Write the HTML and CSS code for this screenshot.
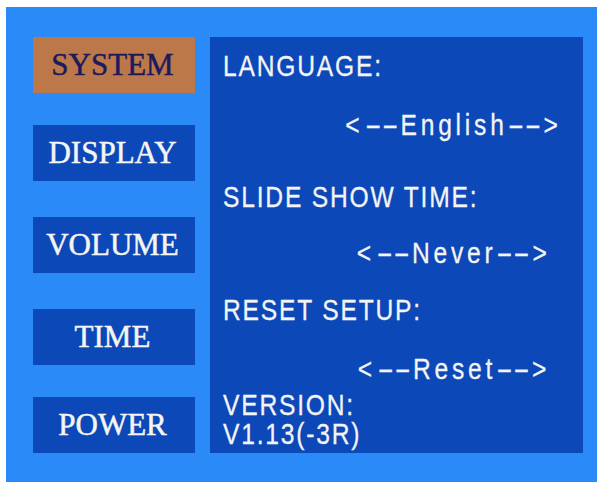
FILE: index.html
```html
<!DOCTYPE html>
<html>
<head>
<meta charset="utf-8">
<link rel="stylesheet" href="styles.css">
</head>
<body>
<div class="screen">
  <div class="menu">
    <div class="btn active">SYSTEM</div>
    <div class="btn">DISPLAY</div>
    <div class="btn wide-gap">VOLUME</div>
    <div class="btn wide-gap">TIME</div>
    <div class="btn">POWER</div>
  </div>
  <div class="panel">
    <div class="row label"><span class="txt">LANGUAGE:</span></div>
    <div class="row value"><span class="txt"><span class="lt">&lt;</span><span class="dash">--</span><span class="word">English</span><span class="dash">--</span><span class="gt">&gt;</span></span></div>
    <div class="row label"><span class="txt">SLIDE SHOW TIME:</span></div>
    <div class="row value"><span class="txt"><span class="lt">&lt;</span><span class="dash">--</span><span class="word">Never</span><span class="dash">--</span><span class="gt">&gt;</span></span></div>
    <div class="row label"><span class="txt">RESET SETUP:</span></div>
    <div class="row value"><span class="txt"><span class="lt">&lt;</span><span class="dash">--</span><span class="word">Reset</span><span class="dash">--</span><span class="gt">&gt;</span></span></div>
    <div class="row label"><span class="txt">VERSION:</span></div>
    <div class="row label"><span class="txt">V1.13(-3R)</span></div>
  </div>
</div>
</body>
</html>
```
FILE: styles.css
```css
html, body {
  margin: 0;
  padding: 0;
  background: #ffffff;
}
body {
  width: 603px;
  height: 484px;
  padding: 7px 0 0 6px;
  box-sizing: border-box;
}
.screen {
  width: 591px;
  height: 475px;
  background: #2a8af8;
  box-sizing: border-box;
  padding: 30px 14px 29px 27px;
  display: flex;
  gap: 15px;
}
.menu {
  width: 162px;
  flex: none;
  display: flex;
  flex-direction: column;
  gap: 32px;
}
.btn {
  height: 56px;
  flex: none;
  background: #0c48b8;
  color: #f6f4f0;
  font-family: "Liberation Serif", "Times New Roman", serif;
  font-size: 31px;
  -webkit-text-stroke: 0.5px currentColor;
  display: flex;
  align-items: center;
  justify-content: center;
  padding-right: 3px;
}
.btn.wide-gap {
  margin-top: 4px;
}
.btn.active {
  background: #bc7848;
  color: #1c1a5c;
}
.panel {
  flex: 1;
  min-width: 0;
  background: #0c48b8;
  color: #f4f4f4;
  font-family: "Liberation Sans", Arial, sans-serif;
  font-size: 30px;
  line-height: 22px;
  -webkit-text-stroke: 0.3px currentColor;
  box-sizing: border-box;
  padding: 18px 0 0 13px;
  display: grid;
  grid-template-rows: 59px 72px 56px 57px 59px 36px 29px 22px;
  align-content: start;
}
.row {
  white-space: nowrap;
}
.txt {
  display: inline-block;
  transform: scaleX(0.82);
}
.label .txt {
  letter-spacing: 2.2px;
  transform-origin: left center;
}
.value {
  text-align: center;
  padding-left: 98px;
}
.value .txt {
  transform-origin: center center;
}
.lt {
  letter-spacing: 6px;
}
.dash {
  display: inline-block;
  letter-spacing: 0.4px;
  transform: scaleX(2);
  transform-origin: left center;
  margin-right: 23px;
}
.word {
  letter-spacing: 4.6px;
}
```
